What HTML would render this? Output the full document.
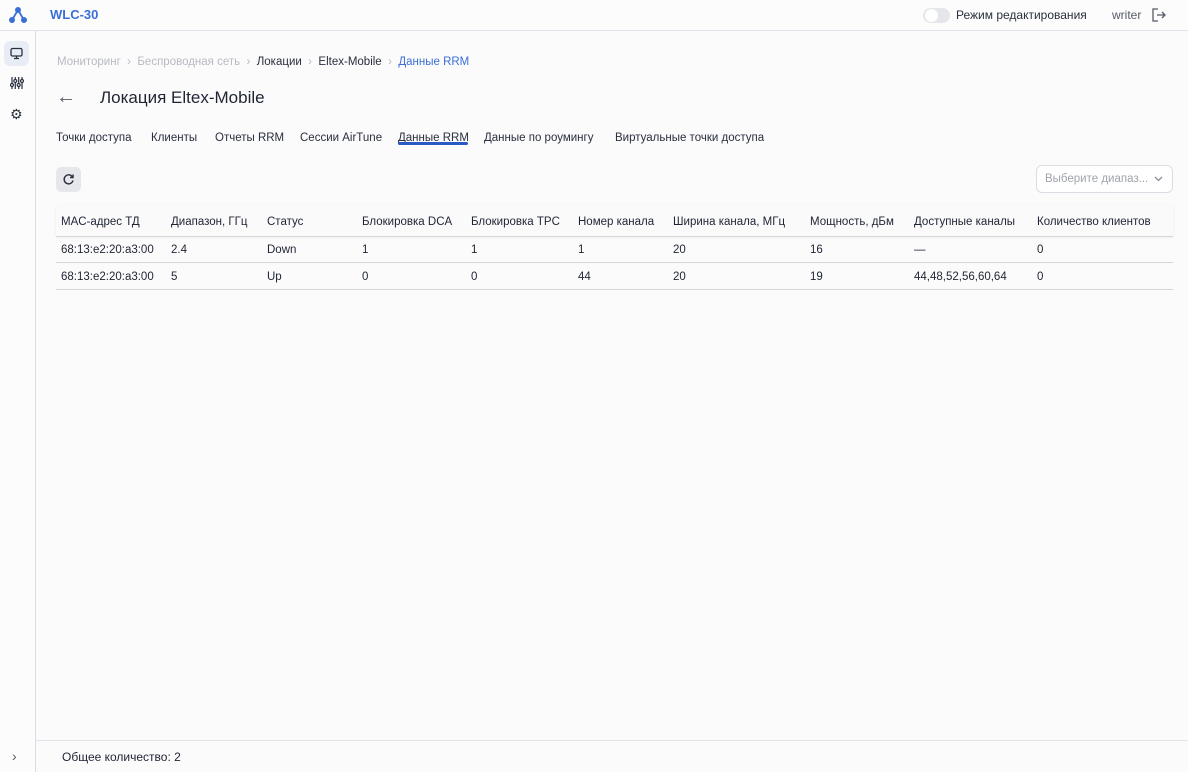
<!DOCTYPE html>
<html><head><meta charset="utf-8"><style>
*{box-sizing:border-box;margin:0;padding:0}
body{width:1188px;height:772px;background:#fbfbfc;font-family:"Liberation Sans","DejaVu Sans",sans-serif;color:#1f2433;position:relative;overflow:hidden;font-size:12px}
.top{position:absolute;left:0;top:0;width:1188px;height:31px;border-bottom:1px solid #e2e3ea;background:#fcfcfd}
.side{position:absolute;left:0;top:31px;width:36px;height:741px;border-right:1px solid #dcdde4;background:#fcfcfd}
.abs{position:absolute;white-space:nowrap}
.bc{top:56px;font-size:11.5px;color:#b8bac3}
.tab{top:132px;font-size:11.5px;color:#2a2f3d}
.hl{position:absolute;left:56px;width:1117px;height:1px;background:#d5d6dc}
.row .abs{font-size:11.5px}
</style></head><body>
<div class="top"></div>
<div class="side"></div>
<svg class="abs" style="left:8px;top:6px" width="20" height="18" viewBox="0 0 20 18"><path d="M10 4L4 14M10 4L16 14" stroke="#3a6fd8" stroke-width="1.8"/><g fill="#3a6fd8"><circle cx="10" cy="4" r="3"/><circle cx="4" cy="14" r="3"/><circle cx="16" cy="14" r="3"/></g></svg>
<div class="abs" style="left:50px;top:7px;font-size:13px;font-weight:bold;color:#3a6fd8">WLC-30</div>
<div class="abs" style="left:923px;top:8px;width:27px;height:15px;border-radius:8px;background:#e5e6ea"></div>
<div class="abs" style="left:925px;top:9px;width:13px;height:13px;border-radius:7px;background:#fff"></div>
<div class="abs" style="left:956px;top:8px;font-size:12px;color:#2a2f3d">Режим редактирования</div>
<div class="abs" style="left:1112px;top:8px;font-size:12px;color:#555a66">writer</div>
<svg class="abs" style="left:1150px;top:7px" width="16" height="16" viewBox="0 0 16 16" fill="none" stroke="#555a66" stroke-width="1.3"><path d="M8 2H3v12h5M7 8h8M12 5l3 3-3 3"/></svg>
<div class="abs" style="left:4px;top:41px;width:25px;height:25px;border-radius:6px;background:#e8ecf5"></div>
<svg class="abs" style="left:10px;top:47px" width="13" height="13" viewBox="0 0 13 13" fill="none" stroke="#2a2f3d" stroke-width="1.3"><rect x="1" y="1.5" width="11" height="7.5" rx="1.5"/><path d="M6.5 9v2.5M4 11.5h5"/></svg>
<svg class="abs" style="left:10px;top:76px" width="14" height="14" viewBox="0 0 14 14" fill="none" stroke="#2a2f3d" stroke-width="1.2"><path d="M2 1v12M5.3 1v12M8.7 1v12M12 1v12"/><g fill="#fff"><circle cx="2" cy="9" r="1.5"/><circle cx="5.3" cy="5" r="1.5"/><circle cx="8.7" cy="9" r="1.5"/><circle cx="12" cy="5" r="1.5"/></g></svg>
<div class="abs" style="left:10px;top:106px;font-size:14px;color:#2a2f3d">⚙</div>
<div class="abs" style="left:12px;top:748px;font-size:14px;color:#555a66">›</div>

<div class="abs bc" style="left:57px">Мониторинг &nbsp;›&nbsp; Беспроводная сеть &nbsp;›&nbsp; <span style="color:#2a2f3d">Локации</span> &nbsp;›&nbsp; <span style="color:#2a2f3d">Eltex-Mobile</span> &nbsp;›&nbsp; <span style="color:#3a6fd8">Данные RRM</span></div>
<div class="abs" style="left:56px;top:86px;font-size:20px;color:#555a66">←</div>
<div class="abs" style="left:100px;top:88px;font-size:17px;color:#1f2433">Локация Eltex-Mobile</div>
<div class="abs tab" style="left:56px">Точки доступа</div>
<div class="abs tab" style="left:151px">Клиенты</div>
<div class="abs tab" style="left:215px">Отчеты RRM</div>
<div class="abs tab" style="left:300px">Сессии AirTune</div>
<div class="abs tab" style="left:398px">Данные RRM</div>
<div class="abs" style="left:398px;top:142px;width:70px;height:3px;background:#2a5bc4;border-radius:2px"></div>
<div class="abs tab" style="left:484px">Данные по роумингу</div>
<div class="abs tab" style="left:615px">Виртуальные точки доступа</div>
<div class="abs" style="left:56px;top:167px;width:25px;height:25px;border-radius:5px;background:#e6e7ea"></div>
<svg class="abs" style="left:62px;top:173px" width="13" height="13" viewBox="0 0 13 13" fill="none" stroke="#2a2f3d" stroke-width="1.4"><path d="M10.5 4A4.5 4.5 0 1 0 11 7.5"/><path d="M11 1.5v3h-3"/></svg>
<div class="abs" style="left:1036px;top:165px;width:137px;height:28px;border:1px solid #dcdde4;border-radius:6px;background:#fff"></div>
<div class="abs" style="left:1045px;top:173px;font-size:11.5px;color:#a0a3ad">Выберите диапаз...</div>
<svg class="abs" style="left:1154px;top:176px" width="9" height="6" viewBox="0 0 9 6" fill="none" stroke="#8a8d97" stroke-width="1.3"><path d="M1 1l3.5 3.5L8 1"/></svg>

<div class="abs" style="left:56px;top:205px;width:1117px;height:31px;background:#fafafb;box-shadow:0 1px 3px rgba(0,0,0,.08);border-radius:4px 4px 0 0"></div>
<div class="hl" style="top:236px"></div><div class="hl" style="top:262px"></div><div class="hl" style="top:289px"></div>
<div class="row" style="position:absolute;left:0;top:216px;width:1188px">
<span class="abs" style="left:61px">MAC-адрес ТД</span><span class="abs" style="left:171px">Диапазон, ГГц</span><span class="abs" style="left:267px">Статус</span><span class="abs" style="left:362px">Блокировка DCA</span><span class="abs" style="left:471px">Блокировка TPC</span><span class="abs" style="left:578px">Номер канала</span><span class="abs" style="left:673px">Ширина канала, МГц</span><span class="abs" style="left:810px">Мощность, дБм</span><span class="abs" style="left:914px">Доступные каналы</span><span class="abs" style="left:1037px">Количество клиентов</span>
</div>
<div class="row" style="position:absolute;left:0;top:244px;width:1188px">
<span class="abs" style="left:61px">68:13:e2:20:a3:00</span><span class="abs" style="left:171px">2.4</span><span class="abs" style="left:267px">Down</span><span class="abs" style="left:362px">1</span><span class="abs" style="left:471px">1</span><span class="abs" style="left:578px">1</span><span class="abs" style="left:673px">20</span><span class="abs" style="left:810px">16</span><span class="abs" style="left:914px">—</span><span class="abs" style="left:1037px">0</span>
</div>
<div class="row" style="position:absolute;left:0;top:271px;width:1188px">
<span class="abs" style="left:61px">68:13:e2:20:a3:00</span><span class="abs" style="left:171px">5</span><span class="abs" style="left:267px">Up</span><span class="abs" style="left:362px">0</span><span class="abs" style="left:471px">0</span><span class="abs" style="left:578px">44</span><span class="abs" style="left:673px">20</span><span class="abs" style="left:810px">19</span><span class="abs" style="left:914px">44,48,52,56,60,64</span><span class="abs" style="left:1037px">0</span>
</div>

<div class="abs" style="left:36px;top:740px;width:1152px;height:1px;background:#e2e3ea"></div>
<div class="abs" style="left:62px;top:750px;font-size:12px;color:#1f2433">Общее количество: 2</div>
</body></html>
